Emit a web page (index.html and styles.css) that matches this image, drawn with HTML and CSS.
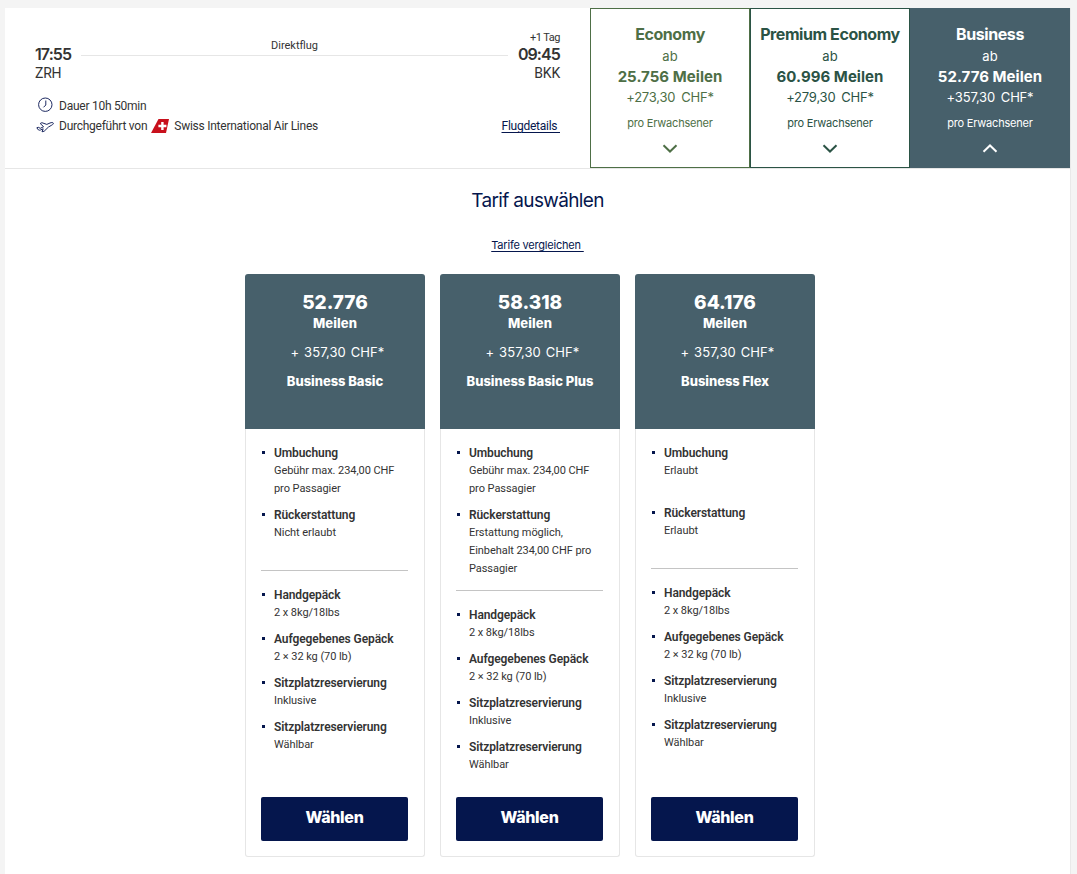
FILE: index.html
```
<!DOCTYPE html>
<html lang="de">
<head>
    <meta charset="UTF-8">
    <meta name="viewport" content="width=device-width, initial-scale=1.0">
    <title>Tarif auswählen</title>
    <link rel="stylesheet" href="styles.css">
</head>
<body>
    <main class="flight-panel">
        <section class="flight-row">
            <div class="flight-info">
                <div class="route">
                    <div class="stop">
                        <span class="time">17:55</span>
                        <span class="airport">ZRH</span>
                    </div>
                    <div class="route-line"><span class="route-label">Direktflug</span></div>
                    <div class="stop stop-arrival">
                        <span class="day-offset">+1 Tag</span>
                        <span class="time">09:45</span>
                        <span class="airport">BKK</span>
                    </div>
                </div>
                <div class="meta">
                    <svg class="meta-icon" width="18" height="18" viewBox="0 0 18 18">
                        <circle cx="9.3" cy="7.700" r="6.700"/>
                        <path d="M9.800 3.500V8l-2.300 2.300"/>
                    </svg>
                    <span>Dauer 10h 50min</span>
                </div>
                <div class="meta">
                    <svg class="meta-icon" width="18" height="14" viewBox="0 0 18 14">
                        <path d="M.8 8.800l1.500-.5 2 1 3.300-1.600-3.400-3.200 1.700-.8 4.900 1.700 3.200-1.400c1.500-.6 3-.6 3.300 0 .2.700-.4 1.600-1.500 2.100L12.500 8l-4.300 4.200-2.200.6 1.200-3-2.700 1.200c-.9.300-1.500.3-2 0z"/>
                    </svg>
                    <span>Durchgeführt von</span>
                    <svg class="carrier-logo" width="18" height="14" viewBox="0 0 18 14">
                        <path d="M7.500 0H18l-3 14H0z" fill="#c8101c"/>
                        <path d="M10.200 3h2.400v2.800h2.800v2.400h-2.800V11h-2.400V8.200H7.400V5.800h2.800z" fill="#fff"/>
                    </svg>
                    <span class="carrier">Swiss International Air Lines</span>
                    <a class="link details-link" href="#">Flugdetails&nbsp;</a>
                </div>
            </div>

            <div class="cabin economy">
                <h3 class="cabin-name">Economy</h3>
                <span class="cabin-from">ab</span>
                <strong class="cabin-miles">25.756 Meilen</strong>
                <span class="cabin-tax">+273,30&nbsp; CHF*</span>
                <span class="cabin-note">pro Erwachsener</span>
                <svg class="chevron" width="16" height="9" viewBox="0 0 16 9"><path d="M1.500 1.200L8 7.500l6.500-6.300"/></svg>
            </div>
            <div class="cabin premium">
                <h3 class="cabin-name">Premium Economy</h3>
                <span class="cabin-from">ab</span>
                <strong class="cabin-miles">60.996 Meilen</strong>
                <span class="cabin-tax">+279,30&nbsp; CHF*</span>
                <span class="cabin-note">pro Erwachsener</span>
                <svg class="chevron" width="16" height="9" viewBox="0 0 16 9"><path d="M1.500 1.200L8 7.500l6.500-6.300"/></svg>
            </div>
            <div class="cabin business">
                <h3 class="cabin-name">Business</h3>
                <span class="cabin-from">ab</span>
                <strong class="cabin-miles">52.776 Meilen</strong>
                <span class="cabin-tax">+357,30&nbsp; CHF*</span>
                <span class="cabin-note">pro Erwachsener</span>
                <svg class="chevron" width="16" height="9" viewBox="0 0 16 9"><path d="M1.500 7.800L8 1.500l6.500 6.300"/></svg>
            </div>
        </section>

        <section class="fares">
            <h2 class="fares-title">Tarif auswählen</h2>
            <a class="link compare-link" href="#">Tarife vergleichen&nbsp;</a>

            <div class="fare-list">
                <article class="fare">
                    <header class="fare-head">
                        <span class="fare-miles">52.776</span>
                        <span class="fare-unit">Meilen</span>
                        <span class="fare-tax">+ 357,30 CHF*</span>
                        <span class="fare-name">Business Basic</span>
                    </header>
                    <div class="fare-body">
                        <ul class="conditions">
                            <li><strong>Umbuchung</strong><span>Gebühr max. 234,00 CHF<br>pro Passagier</span></li>
                            <li><strong>Rückerstattung</strong><span>Nicht erlaubt</span></li>
                        </ul>
                        <ul class="services">
                            <li><strong>Handgepäck</strong><span>2 x 8kg/18lbs</span></li>
                            <li><strong>Aufgegebenes Gepäck</strong><span>2 × 32 kg (70 lb)</span></li>
                            <li><strong>Sitzplatzreservierung</strong><span>Inklusive</span></li>
                            <li><strong>Sitzplatzreservierung</strong><span>Wählbar</span></li>
                        </ul>
                        <button class="select-btn">Wählen</button>
                    </div>
                </article>

                <article class="fare">
                    <header class="fare-head">
                        <span class="fare-miles">58.318</span>
                        <span class="fare-unit">Meilen</span>
                        <span class="fare-tax">+ 357,30 CHF*</span>
                        <span class="fare-name">Business Basic Plus</span>
                    </header>
                    <div class="fare-body">
                        <ul class="conditions">
                            <li><strong>Umbuchung</strong><span>Gebühr max. 234,00 CHF<br>pro Passagier</span></li>
                            <li><strong>Rückerstattung</strong><span>Erstattung möglich,<br>Einbehalt 234,00 CHF pro<br>Passagier</span></li>
                        </ul>
                        <ul class="services">
                            <li><strong>Handgepäck</strong><span>2 x 8kg/18lbs</span></li>
                            <li><strong>Aufgegebenes Gepäck</strong><span>2 × 32 kg (70 lb)</span></li>
                            <li><strong>Sitzplatzreservierung</strong><span>Inklusive</span></li>
                            <li><strong>Sitzplatzreservierung</strong><span>Wählbar</span></li>
                        </ul>
                        <button class="select-btn">Wählen</button>
                    </div>
                </article>

                <article class="fare">
                    <header class="fare-head">
                        <span class="fare-miles">64.176</span>
                        <span class="fare-unit">Meilen</span>
                        <span class="fare-tax">+ 357,30 CHF*</span>
                        <span class="fare-name">Business Flex</span>
                    </header>
                    <div class="fare-body">
                        <ul class="conditions">
                            <li><strong>Umbuchung</strong><span>Erlaubt</span></li>
                            <li><strong>Rückerstattung</strong><span>Erlaubt</span></li>
                        </ul>
                        <ul class="services">
                            <li><strong>Handgepäck</strong><span>2 x 8kg/18lbs</span></li>
                            <li><strong>Aufgegebenes Gepäck</strong><span>2 × 32 kg (70 lb)</span></li>
                            <li><strong>Sitzplatzreservierung</strong><span>Inklusive</span></li>
                            <li><strong>Sitzplatzreservierung</strong><span>Wählbar</span></li>
                        </ul>
                        <button class="select-btn">Wählen</button>
                    </div>
                </article>
            </div>
        </section>
    </main>
</body>
</html>
```
FILE: styles.css
```
* {
    box-sizing: border-box;
}
body {
    margin: 0;
    padding: 8px 6px 0 5px;
    background: #f4f4f4;
    color: #333;
    font-family: Inter, "Liberation Sans", sans-serif;
    font-size: 12px;
    overflow: hidden;
}
h2,
h3,
ul {
    margin: 0;
    padding: 0;
}
.flight-panel {
    width: 1066px;
    min-height: 866px;
    background: #fff;
    border-right: 1px solid #e9e9e9;
}
.flight-row {
    display: flex;
    height: 161px;
    border-bottom: 1px solid #e6e6e6;
}
.flight-info {
    width: 585px;
    padding: 22px 30px 0;
    font-family: Roboto, "Liberation Sans", sans-serif;
}
.route {
    display: flex;
    height: 66px;
}
.stop {
    display: flex;
    flex-direction: column;
    justify-content: flex-end;
    padding-bottom: 13px;
    height: 65px;
}
.stop-arrival {
    align-items: flex-end;
}
.time {
    font-family: Inter, "Liberation Sans", sans-serif;
    font-size: 16px;
    font-weight: 600;
    line-height: 20px;
    letter-spacing: -0.9px;
}
.airport {
    font-size: 14px;
    line-height: 18px;
    letter-spacing: -0.2px;
}
.day-offset {
    font-size: 11px;
    line-height: 12px;
    letter-spacing: -0.5px;
}
.route-line {
    flex: 1;
    height: 26px;
    margin: 0 10px;
    padding-top: 8px;
    border-bottom: 1px solid #e6e6e6;
    text-align: center;
}
.route-label {
    font-size: 11px;
    line-height: 16px;
}
.meta {
    display: flex;
    align-items: center;
    height: 20px;
    letter-spacing: -0.25px;
}
.meta-icon {
    margin: 0 5px 0 1px;
    fill: none;
    stroke: #1c2860;
    stroke-width: 1;
    stroke-linejoin: round;
}
.carrier-logo {
    margin: 0 5px 0 4px;
}
.link {
    color: #05164d;
    text-decoration: underline;
    text-underline-offset: 2px;
}
.details-link {
    margin-left: auto;
}
.cabin {
    display: flex;
    flex-direction: column;
    align-items: center;
    width: 160px;
    height: 160px;
    padding-top: 14px;
    border: 1px solid currentColor;
    white-space: nowrap;
}
.economy {
    color: #4e6f46;
}
.premium {
    color: #2b5345;
}
.business {
    background: #47606b;
    border-color: #47606b;
    color: #fff;
}
.cabin-name {
    font-size: 16px;
    font-weight: 700;
    line-height: 22px;
    letter-spacing: -0.42px;
}
.cabin-from {
    margin-top: 1px;
    font-size: 13px;
    line-height: 20px;
}
.cabin-miles {
    padding-top: 1px;
    font-size: 15px;
    font-weight: 700;
    line-height: 20px;
    letter-spacing: 0.05px;
}
.cabin-tax {
    margin-top: -1px;
    font-size: 13px;
    line-height: 22px;
    letter-spacing: -0.2px;
    word-spacing: -0.5px;
}
.cabin-note {
    margin-top: 7px;
    font-size: 11px;
    line-height: 16px;
    letter-spacing: -0.2px;
}
.chevron {
    margin-top: 13px;
    fill: none;
    stroke: currentColor;
    stroke-width: 2;
}
.fares {
    display: flex;
    flex-direction: column;
    align-items: center;
    padding-top: 19px;
}
.fares-title {
    color: #05164d;
    font-size: 19px;
    font-weight: 400;
    line-height: 26px;
    letter-spacing: -0.65px;
}
.compare-link {
    margin-top: 23px;
    font-size: 11px;
    line-height: 16px;
    letter-spacing: -0.2px;
}
.fare-list {
    display: flex;
    gap: 15px;
    width: 570px;
    margin: 21px 15px 0 0;
}
.fare {
    display: flex;
    flex-direction: column;
    width: 180px;
    height: 583px;
}
.fare-head {
    display: flex;
    flex-direction: column;
    align-items: center;
    height: 155px;
    padding-top: 16px;
    background: #47606b;
    border-radius: 3px 3px 0 0;
    color: #fff;
}
.fare-miles {
    font-size: 19px;
    font-weight: 800;
    line-height: 25px;
}
.fare-unit {
    font-size: 13px;
    font-weight: 800;
    line-height: 16px;
    letter-spacing: 0.1px;
}
.fare-tax {
    margin-top: 12px;
    padding-left: 5px;
    font-size: 13px;
    line-height: 18px;
    letter-spacing: 0.1px;
    word-spacing: 1px;
}
.fare-name {
    margin-top: 11px;
    font-size: 13px;
    font-weight: 800;
    line-height: 18px;
    letter-spacing: -0.05px;
}
.fare-body {
    display: flex;
    flex: 1;
    flex-direction: column;
    padding: 16px 16px 15px 15px;
    border: 1px solid #e6e6e6;
    border-top: 0;
    border-radius: 0 0 3px 3px;
    font-family: Roboto, "Liberation Sans", sans-serif;
}
.fare-body ul {
    list-style: none;
}
.fare-body li {
    padding: 1px 0 9px 13px;
    background: linear-gradient(#05164d, #05164d) 1px 6px / 3px 3px no-repeat;
    white-space: nowrap;
}
.fare-body li strong {
    display: block;
    margin-top: -1px;
    font-size: 12px;
    font-weight: 600;
    line-height: 17px;
    letter-spacing: -0.1px;
}
.fare-body li span {
    display: block;
    font-size: 11px;
    line-height: 18px;
    letter-spacing: -0.06px;
}
.conditions {
    padding-bottom: 3px;
    border-bottom: 1px solid #c4c4c4;
}
.conditions li {
    min-height: 60px;
}
.fare-body .services {
    padding-top: 16px;
}
.select-btn {
    height: 44px;
    margin-top: auto;
    padding: 0 0 4px;
    background: #05164d;
    border: 0;
    border-radius: 2px;
    color: #fff;
    font-family: Inter, "Liberation Sans", sans-serif;
    font-size: 16px;
    font-weight: 800;
    letter-spacing: -0.3px;
}
```
